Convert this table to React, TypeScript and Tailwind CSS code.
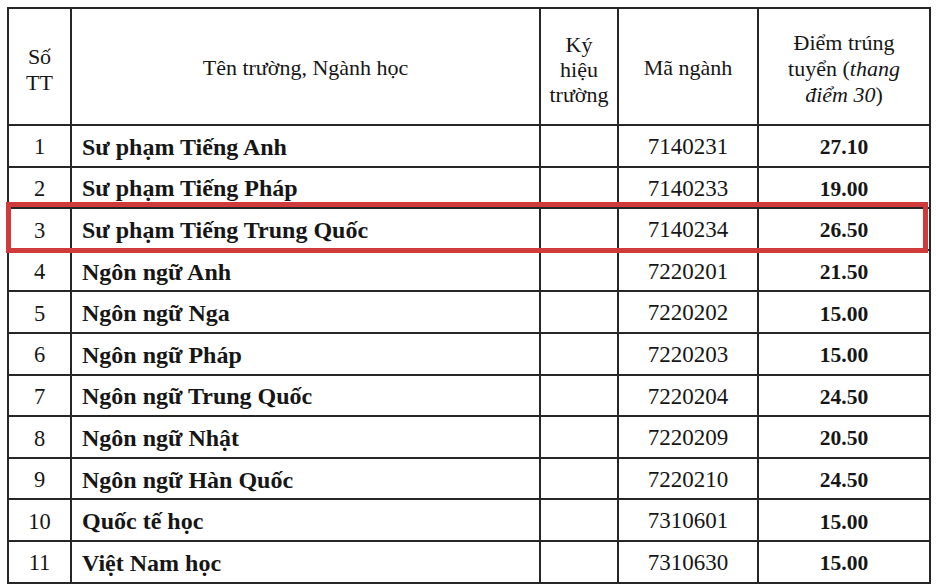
import React from "react";

const rows: [string, string, string, string][] = [
  ["1", "Sư phạm Tiếng Anh", "7140231", "27.10"],
  ["2", "Sư phạm Tiếng Pháp", "7140233", "19.00"],
  ["3", "Sư phạm Tiếng Trung Quốc", "7140234", "26.50"],
  ["4", "Ngôn ngữ Anh", "7220201", "21.50"],
  ["5", "Ngôn ngữ Nga", "7220202", "15.00"],
  ["6", "Ngôn ngữ Pháp", "7220203", "15.00"],
  ["7", "Ngôn ngữ Trung Quốc", "7220204", "24.50"],
  ["8", "Ngôn ngữ Nhật", "7220209", "20.50"],
  ["9", "Ngôn ngữ Hàn Quốc", "7220210", "24.50"],
  ["10", "Quốc tế học", "7310601", "15.00"],
  ["11", "Việt Nam học", "7310630", "15.00"],
];

const cell = "border-2 border-[#262626]";

export default function App() {
  return (
    <div className="relative w-[936px] h-[588px] bg-white overflow-hidden pt-[7px] pl-[7px] text-[#161616] font-['Liberation_Serif','Times_New_Roman',serif]">
      <table className="table-fixed border-collapse w-[922px] border-2 border-[#262626]">
        <colgroup>
          <col className="w-[63px]" />
          <col className="w-[469px]" />
          <col className="w-[78px]" />
          <col className="w-[140px]" />
          <col className="w-[172px]" />
        </colgroup>
        <thead>
          <tr className="h-[117px] text-[22px] leading-[26px]">
            <th className={`${cell} font-normal text-center align-middle pt-[7px]`}>
              Số
              <br />
              TT
            </th>
            <th className={`${cell} font-normal text-center align-middle pt-[3px]`}>
              Tên trường, Ngành học
            </th>
            <th className={`${cell} font-normal text-center align-middle leading-[25px] pt-[5px]`}>
              Ký
              <br />
              hiệu
              <br />
              trường
            </th>
            <th className={`${cell} font-normal text-center align-middle pt-[3px]`}>
              Mã ngành
            </th>
            <th className={`${cell} font-normal text-center align-middle pt-[5px]`}>
              Điểm trúng
              <br />
              tuyển (<i>thang</i>
              <br />
              <i>điểm 30</i>)
            </th>
          </tr>
        </thead>
        <tbody>
          {rows.map(([n, name, code, score]) => (
            <tr key={n} className="h-[41.6px]">
              <td className={`${cell} text-center align-middle text-[22.5px] pt-[3px]`}>{n}</td>
              <td className={`${cell} pl-[10px] font-bold align-middle text-[24px] pt-[2px]`}>{name}</td>
              <td className={cell}></td>
              <td className={`${cell} text-center align-middle text-[23px] pt-[3px]`}>{code}</td>
              <td className={`${cell} text-center align-middle font-bold text-[21.5px] pt-[3px]`}>{score}</td>
            </tr>
          ))}
        </tbody>
      </table>
      <div className="absolute left-[6px] top-[202px] w-[922px] h-[51px] border-[5px] border-[#cf3a3a]" />
    </div>
  );
}
